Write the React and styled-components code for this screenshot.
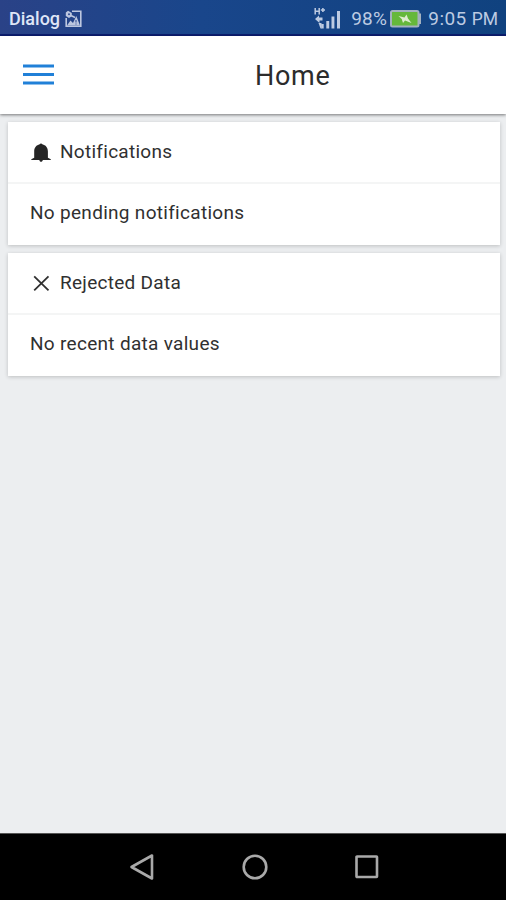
import React from 'react';
import styled, { createGlobalStyle } from 'styled-components';

const GlobalStyle = createGlobalStyle`
  * { box-sizing: border-box; }
  body { margin: 0; font-family: Roboto, "Liberation Sans", sans-serif; }
  svg { display: block; flex: none; }
`;

const Screen = styled.div`
  display: flex;
  flex-direction: column;
  width: 506px;
  height: 900px;
  overflow: hidden;
  background: #eceef0;
`;

const StatusBar = styled.div`
  display: flex;
  align-items: center;
  justify-content: space-between;
  flex: none;
  height: 36px;
  padding: 3px 8px 0 9px;
  background: linear-gradient(90deg, #2a4287 0%, #19468b 40%, #10427f 100%);
  border-bottom: 2px solid #0c1d70;
`;

const StatusGroup = styled.div`
  display: flex;
  align-items: center;
  gap: ${(p) => p.$gap}px;
`;

const StatusText = styled.span`
  font-size: ${(p) => p.$size}px;
  line-height: 24px;
  letter-spacing: ${(p) => p.$spacing || 0}px;
  font-weight: ${(p) => p.$weight || 400};
  color: ${(p) => p.$color || '#bdcbe2'};
  white-space: pre;
`;

const Battery = styled(StatusGroup)`
  margin-right: 6px;
`;

const Header = styled.header`
  display: flex;
  align-items: center;
  flex: none;
  height: 78px;
  background: #fff;
  box-shadow: 0 1px 3px rgba(0, 0, 0, 0.5);
`;

const MenuButton = styled.button`
  display: flex;
  width: 32px;
  margin: 0 0 1px 23px;
  padding: 0;
  border: 0;
  background: none;
`;

const Title = styled.h1`
  margin: 1px 0 0 200px;
  font-size: 27px;
  line-height: 32px;
  font-weight: 400;
  letter-spacing: 0.7px;
  color: #2c2c2c;
`;

const Content = styled.main`
  display: flex;
  flex: 1;
  flex-direction: column;
  gap: 8px;
  padding: 8px 6px 0 8px;
`;

const Card = styled.section`
  height: 123px;
  background: #fff;
  box-shadow: 0 1px 4px rgba(0, 0, 0, 0.2);
`;

const CardHeader = styled.div`
  display: flex;
  align-items: center;
  height: 62px;
  padding: 0 22px;
  border-bottom: 2px solid #f4f5f5;
`;

const CardIcon = styled.span`
  width: 22px;
  height: 20px;
  margin-right: 8px;
`;

const CardTitle = styled.h2`
  margin: 0;
  font-size: 19px;
  line-height: 24px;
  font-weight: 400;
  letter-spacing: 0.28px;
  color: #303030;
`;

const CardBody = styled.p`
  margin: 0;
  padding: 17px 22px;
  font-size: 19px;
  line-height: 24px;
  letter-spacing: 0.3px;
  color: #303030;
`;

const NavBar = styled.nav`
  display: flex;
  flex: none;
  height: 67px;
  padding-left: 128px;
  align-items: center;
  gap: 84.5px;
  background: #000;
  border-top: 1px solid #555;
`;

const PictureIcon = () => (
  <svg width="17" height="18" viewBox="0 0 17 18">
    <path d="M7 1.2H15.8V16.3H1.2V8" fill="none" stroke="#bdc7df" strokeWidth="1.6" />
    <path d="M0.8 2.5L3 0.8L6.8 3V6.2L4 8L0.8 6Z" fill="#bdc7df" />
    <path d="M2 15.5L5.5 10.5L8 13L11.3 6L15 15.5Z" fill="#bdc7df" />
    <path d="M6 5.5L10 7.5" stroke="#bdc7df" strokeWidth="1.5" />
    <circle cx="4" cy="4.2" r="1" fill="#344f93" />
    <path d="M11 10V12.5M11 13.5V14.5" stroke="#344f93" strokeWidth="1.1" />
  </svg>
);

const SignalIcon = () => (
  <svg width="27" height="22" viewBox="0 0 27 22">
    <path d="M1.2 0V6.5M5.2 0V6.5M1.2 3.3H5.2M6.8 2H11M8.9 0V4" stroke="#bdcbe2" strokeWidth="1.5" fill="none" />
    <path d="M1 11L5 7.5V9.5H8.5V12.5H5.5V15Z" fill="#bdcbe2" />
    <path d="M4.5 15H7.5V20.5H6.5Z" fill="#bdcbe2" />
    <path d="M7.2 16H9.7V20.5H7.2ZM12.3 13H15.2V20.5H12.3ZM17.5 8.5H20.4V20.5H17.5ZM23 3H26V20.5H23Z" fill="#bdcbe2" />
  </svg>
);

const BatteryIcon = () => (
  <svg width="32" height="18" viewBox="0 0 32 18">
    <rect x="1" y="1" width="27.5" height="15.5" rx="1.5" fill="#65b83b" stroke="#a3b1bf" strokeWidth="2" />
    <path d="M29 3.5H31V14H29Z" fill="#a3b1bf" />
    <path d="M8.5 6L14.5 7.5L16.5 4.5L18 8.5L21.5 13L15 10.5L13 13L11.7 9Z" fill="#deedcf" />
  </svg>
);

const MenuIcon = () => (
  <svg width="32" height="24" viewBox="0 0 32 24">
    <path d="M0 3H31M0 11.5H31M0 20H31" stroke="#2080d8" strokeWidth="3" />
  </svg>
);

const BellIcon = () => (
  <svg width="22" height="20" viewBox="0 0 22 20">
    <path d="M4.2 15.8V9.5C4.2 5.5 6.4 3 9.7 2.2C10 1.2 12 1.2 12.3 2.2C15.7 3 17.9 5.5 17.9 9.5V15.8L20.8 17.2V18H1.3V17.2Z" fill="#252525" />
    <path d="M9.3 17.8H12.8C12.6 20.5 9.5 20.5 9.3 17.8Z" fill="#252525" />
  </svg>
);

const CloseIcon = () => (
  <svg width="22" height="20" viewBox="0 0 22 20">
    <path d="M4.2 3.4L18.5 17.4M18.5 3.4L4.2 17.4" stroke="#303030" strokeWidth="1.8" />
  </svg>
);

const BackIcon = () => (
  <svg width="28" height="28" viewBox="0 0 28 28">
    <path d="M3.5 14L24 2.5V25.5Z" fill="none" stroke="#a9a9a9" strokeWidth="2.6" strokeLinejoin="round" />
  </svg>
);

const HomeIcon = () => (
  <svg width="28" height="28" viewBox="0 0 28 28">
    <circle cx="14" cy="14" r="11.3" fill="none" stroke="#a9a9a9" strokeWidth="2.6" />
  </svg>
);

const RecentsIcon = () => (
  <svg width="28" height="28" viewBox="0 0 28 28">
    <rect x="3.5" y="3.5" width="20.5" height="20.5" rx="0.5" fill="none" stroke="#a9a9a9" strokeWidth="2.6" />
  </svg>
);

const cards = [
  { title: 'Notifications', body: 'No pending notifications', Icon: BellIcon },
  { title: 'Rejected Data', body: 'No recent data values', Icon: CloseIcon },
];

export default function App() {
  return (
    <>
      <GlobalStyle />
      <Screen>
        <StatusBar>
          <StatusGroup $gap={5}>
            <StatusText $size={18} $weight={500} $color="#dfe6f7">Dialog</StatusText>
            <PictureIcon />
          </StatusGroup>
          <StatusGroup $gap={0}>
            <Battery $gap={10}>
              <SignalIcon />
              <StatusGroup $gap={3}>
                <StatusText $size={19} $spacing={0.3}>98%</StatusText>
                <BatteryIcon />
              </StatusGroup>
            </Battery>
            <StatusText $size={19} $spacing={0.4}>9:05 </StatusText>
            <StatusText $size={17.5}>PM</StatusText>
          </StatusGroup>
        </StatusBar>
        <Header>
          <MenuButton aria-label="Menu"><MenuIcon /></MenuButton>
          <Title>Home</Title>
        </Header>
        <Content>
          {cards.map(({ title, body, Icon }) => (
            <Card key={title}>
              <CardHeader>
                <CardIcon><Icon /></CardIcon>
                <CardTitle>{title}</CardTitle>
              </CardHeader>
              <CardBody>{body}</CardBody>
            </Card>
          ))}
        </Content>
        <NavBar>
          <BackIcon />
          <HomeIcon />
          <RecentsIcon />
        </NavBar>
      </Screen>
    </>
  );
}
